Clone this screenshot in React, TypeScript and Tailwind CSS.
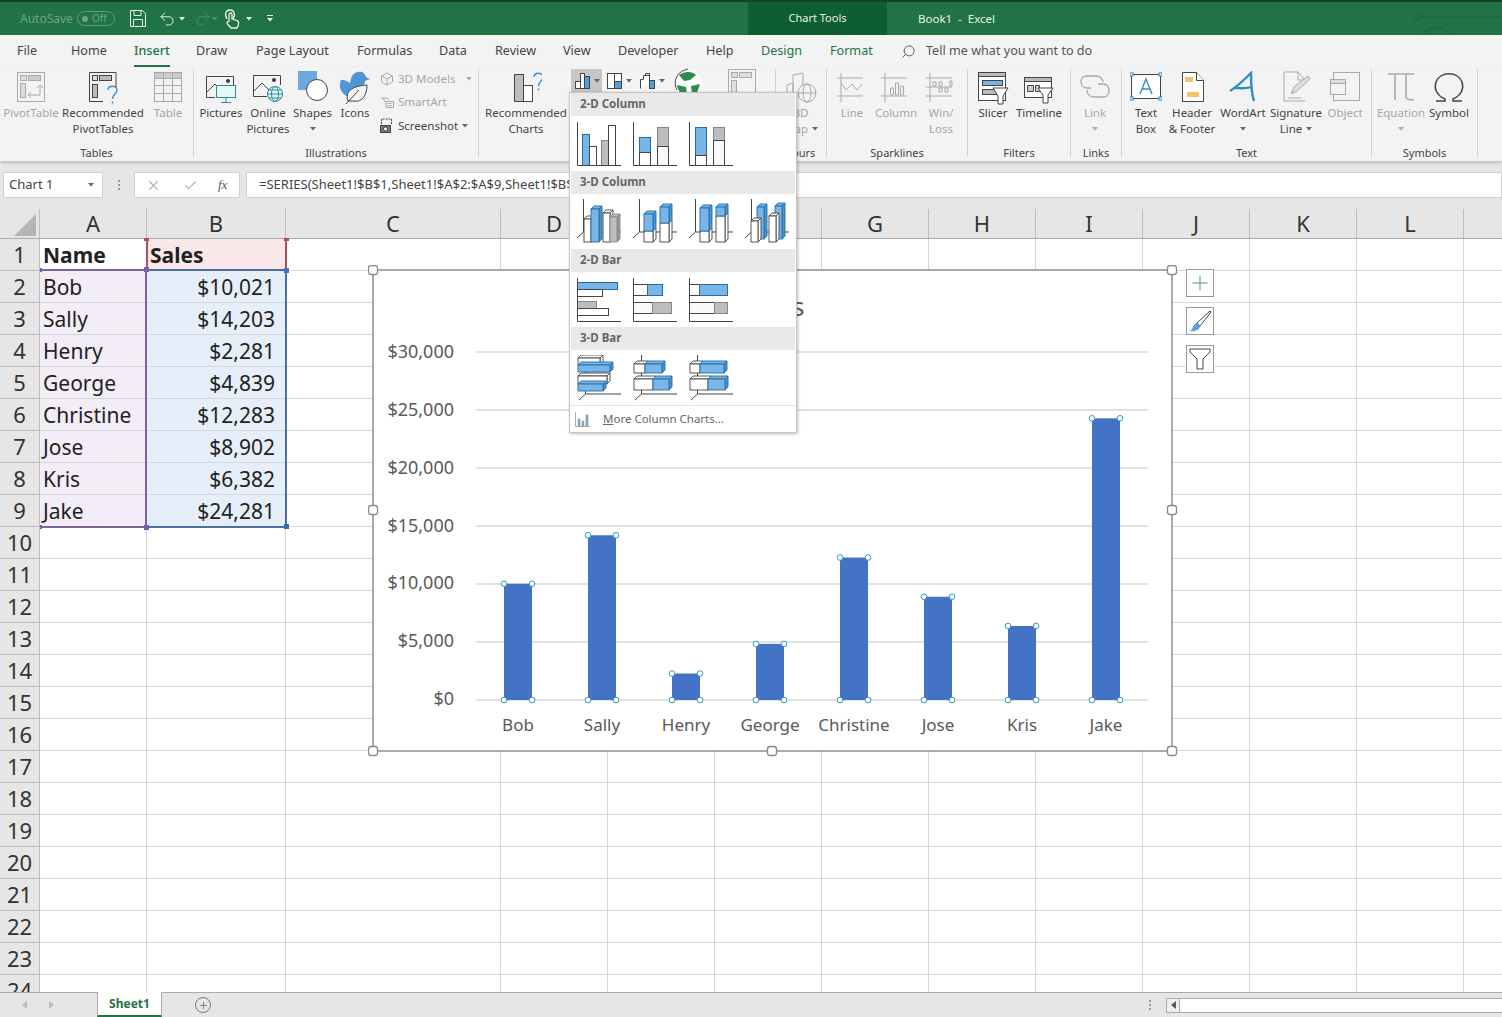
import React from "react";
import { Undo2, Redo2, Search, X, Check, Plus } from "lucide-react";

const D = "#444444";
const G = "#a9a9a9";
const B = "#7ab5e8";
const BD = "#1f6ea8";
const GR = "#bdbdbd";

function Q({ x, y, s = 1 }: { x: number; y: number; s?: number }) {
  return <path transform={`translate(${x} ${y}) scale(${s})`} d="M0 4 C0 -1 9 -1 9 4 C9 8 4.5 8 4.5 13 M4.5 15.5 V17.5" fill="none" stroke="#3b8ec9" strokeWidth="1.4" />;
}

const Icons: Record<string, React.ReactNode> = {
  pivot: (
    <g fill="none" stroke={G}>
      <rect x="2.5" y="1.5" width="27" height="29" />
      <rect x="5.5" y="4.5" width="6" height="5" fill="#ddd" />
      <rect x="13.5" y="4.5" width="12" height="5" fill="#ccc" />
      <rect x="5.5" y="12.5" width="5" height="14" fill="#ddd" />
      <path d="M13 24h12V14M22 17l3-3 3 3M16 21l-3 3 3 3" />
    </g>
  ),
  recPivot: (
    <g fill="none" stroke={D}>
      <path d="M16 30.5H2.5V1.5H29V17" />
      <rect x="5.5" y="4.5" width="5" height="5" fill="#ddd" />
      <rect x="12.5" y="4.5" width="12" height="5" fill="#bbb" />
      <rect x="5.5" y="13.5" width="5" height="13" fill="#bbb" />
      <Q x={21} y={15} s={1} />
    </g>
  ),
  table: (
    <g fill="none" stroke={G}>
      <rect x="2.5" y="1.5" width="27" height="29" />
      <rect x="2.5" y="1.5" width="27" height="6" fill="#ccc" />
      <path d="M11.5 1.5v29M20.5 1.5v29M2.5 14.5h27M2.5 22.5h27" />
    </g>
  ),
  pictures: (
    <g fill="none" stroke={D}>
      <path d="M10 26.5H1.5V5.5h27V14" />
      <path d="M2 21l8-8 6 6" />
      <circle cx="23" cy="10" r="1.6" fill={D} />
      <rect x="11.5" y="14.500" width="19" height="12" fill="#e4f6f6" stroke="#2b8aa0" />
      <path d="M21 27v4M16 31.500h10" stroke="#2b8aa0" />
    </g>
  ),
  online: (
    <g fill="none" stroke={D}>
      <path d="M28.500 14V4.500h-27v21H15" />
      <path d="M2 20l8-8 8 8" />
      <circle cx="22" cy="9" r="1.6" fill={D} />
      <g stroke="#2b8aa0">
        <circle cx="23" cy="23" r="7.500" fill="#e4f6f6" />
        <ellipse cx="23" cy="23" rx="3.500" ry="7.500" />
        <path d="M15.500 23h15M17 19h12M17 27h12" />
      </g>
    </g>
  ),
  shapes: (
    <g>
      <rect x="1" y="0" width="19" height="19" fill="#6ea8e0" />
      <circle cx="20" cy="19" r="10.500" fill="#fff" stroke={D} />
    </g>
  ),
  icons: (
    <g>
      <path d="M2 9c3-1 7 2 9 3 1-5 2-10 8-11 5-1 7 2 8 5l4 2-5 2c0 4-3 5-5 8l-7 9C5 26-2 18 2 9z" fill="#4f96d4" />
      <path d="M9 30c-3-9 3-15 19-16 0 9-4 18-14 16z" fill="#f3f3f3" stroke={D} />
      <path d="M7 33l13-14" stroke={D} fill="none" />
    </g>
  ),
  recChart: (
    <g stroke={D} fill="none">
      <rect x="4.5" y="3.5" width="9" height="27" fill="#bdbdbd" />
      <rect x="13.5" y="14.5" width="9" height="16" fill="#fff" />
      <Q x={24} y={2} s={1} />
    </g>
  ),
  globe: (
    <g>
      <circle cx="16" cy="16" r="13" fill="#fff" />
      <path d="M6 7c6-4 13-4 17 0l-6 5-6 1zM18 18l9-2-3 9-5 1zM4 17l9 2 1 9c-6-1-9-5-10-11z" fill="#2e8b4f" />
      <path d="M4 22C-1 12 5 3 15 1" fill="none" stroke={D} />
    </g>
  ),
  pivotChart: (
    <g fill="none" stroke={G}>
      <rect x="2.5" y="1.5" width="27" height="29" />
      <rect x="5.5" y="4.5" width="6" height="5" fill="#ddd" />
      <rect x="13.5" y="4.5" width="12" height="5" fill="#ddd" />
      <rect x="5.5" y="12.5" width="5" height="14" fill="#ddd" />
    </g>
  ),
  map3d: (
    <g fill="none" stroke={G}>
      <path d="M2 30V14l6-2v18M8 30V4l10-2v28" />
      <circle cx="22" cy="22" r="9" fill="#f3f3f3" />
      <ellipse cx="22" cy="22" rx="4" ry="9" />
      <path d="M13 22h18" />
    </g>
  ),
  spLine: (
    <g fill="none" stroke={G}>
      <path d="M1 7h26M1 25h26M5 2v29" />
      <path d="M5 12l5 7 6-6 5 6 5-6" />
    </g>
  ),
  spCol: (
    <g fill="none" stroke={G}>
      <path d="M1 7h26M1 25h26M5 2v29" />
      <path d="M10.5 24v-7h3v7zM15.5 24V12h3v12zM20.5 24v-9h3v9z" />
    </g>
  ),
  spWin: (
    <g fill="none" stroke={G}>
      <path d="M1 7h26M1 25h26M5 2v29M1 16h26" />
      <path d="M8 15v-4h3v4zM14 15v-4h3v4zM14 21v-4h3v4zM20 21v-4h3v4zM25 15v-5h2v5z" />
    </g>
  ),
  slicer: (
    <g stroke={D} fill="none">
      <rect x="1.5" y="1.5" width="27" height="28" fill="#fff" />
      <rect x="1.5" y="1.5" width="27" height="4" fill="#bbb" />
      <rect x="5.5" y="9.5" width="20" height="5" fill={B} />
      <rect x="5.5" y="18.5" width="14" height="5" fill="#bbb" />
      <path d="M16 17h15l-5 8v8h-5v-8z" fill="#fff" />
    </g>
  ),
  timeline: (
    <g stroke={D} fill="none">
      <rect x="1.5" y="6.5" width="27" height="20" fill="#fff" />
      <rect x="1.5" y="6.5" width="27" height="4" fill="#bbb" />
      <path d="M4.5 14.5h6v6h-6zM12.5 14.5h4v6h-4z" fill="#ccc" />
      <path d="M15 17h15l-5 7v8h-5v-8z" fill="#fff" />
    </g>
  ),
  link: (
    <g fill="none" stroke={G} strokeWidth="1.3">
      <path d="M12 17H8c-8 0-8-12 0-12h9c5 0 7 4 7 6" />
      <path d="M19 13h5c8 0 8 13 0 13h-9c-6 0-7-5-7-7" />
    </g>
  ),
  textbox: (
    <g>
      <rect x="1.5" y="3.5" width="29" height="24" fill="#fff" stroke={D} />
      <g fill="#fff" stroke="#2e7fb5">
        <rect x="0" y="2" width="3" height="3" />
        <rect x="29" y="2" width="3" height="3" />
        <rect x="0" y="26" width="3" height="3" />
        <rect x="29" y="26" width="3" height="3" />
      </g>
      <path d="M10 23l6-15 6 15M12 18h8" fill="none" stroke="#3b8ec9" strokeWidth="1.4" />
    </g>
  ),
  header: (
    <g stroke={D}>
      <path d="M6.5 1.5h14l7 8v21h-21z" fill="#fff" />
      <path d="M20.5 1.5v8h7" fill="#fff" />
      <rect x="9" y="6" width="8" height="5" fill="#f3c36b" stroke="none" />
      <rect x="11" y="21" width="12" height="5" fill="#f3c36b" stroke="none" />
    </g>
  ),
  wordart: (
    <g fill="none" stroke="#2f8ec2" strokeWidth="2.4">
      <path d="M3 20c8-5 15-12 21-18 0 9 0 19 3 28" />
      <path d="M8 17c5 0 11 1 16-1" />
    </g>
  ),
  signature: (
    <g fill="none" stroke={G}>
      <path d="M25 30H4V1h14l8 9" />
      <path d="M18 1v8h6" />
      <path d="M11 23l3-7 14-11 2 3-13 12z" fill="#ddd" />
      <path d="M8 27h13" />
    </g>
  ),
  object: (
    <g fill="none" stroke={G}>
      <rect x="4.5" y="1.5" width="26" height="28" />
      <rect x="1.5" y="8.5" width="15" height="15" fill="#f3f3f3" />
      <rect x="1.5" y="8.5" width="15" height="4" fill="#ddd" />
    </g>
  ),
  equation: (
    <g fill="none" stroke={G} strokeWidth="1.6">
      <path d="M3 3h26M10 3v26M21 3v23c0 2 2 3 8 3" />
    </g>
  ),
  symbol: (
    <g fill="none" stroke={D} strokeWidth="1.5">
      <path d="M3 30h9v-2C3 24 1 17 3 11c4-11 22-11 26 0 2 6 0 13-9 17v2h9" />
    </g>
  ),
};

function RibbonIcon({ k }: { k: string }) {
  return (
    <svg width="32" height="34" viewBox="0 0 32 34" className="shrink-0">
      {Icons[k]}
    </svg>
  );
}

function Caret({ c = "#666" }: { c?: string }) {
  return (
    <svg width="6" height="4" viewBox="0 0 6 4" className="shrink-0">
      <path d="M0 0h6L3 3.5z" fill={c} />
    </svg>
  );
}

function Item({ w, k, lines, off, caret }: { w: string; k: string; lines: string[]; off?: boolean; caret?: "below" | "inline" }) {
  return (
    <div className={`${w} flex flex-col items-center shrink-0 pt-1 text-[11.5px] leading-4 ${off ? "text-[#a6a6a6]" : "text-[#444]"}`}>
      <RibbonIcon k={k} />
      <div className="whitespace-nowrap">{lines[0]}</div>
      {lines[1] && (
        <div className="whitespace-nowrap flex items-center gap-1">
          {lines[1]}
          {caret === "inline" && <Caret />}
        </div>
      )}
      {caret === "below" && (
        <div className="h-4 flex items-center">
          <Caret c={off ? "#aaa" : "#666"} />
        </div>
      )}
    </div>
  );
}

function Group({ w, label, children }: { w: string; label: string; children: React.ReactNode }) {
  return (
    <div className={`${w} shrink-0 h-full flex`}>
      <div className="flex-1 min-w-0 flex flex-col">
        <div className="flex-1 flex">{children}</div>
        <div className="h-4 text-center text-[11px] leading-4 text-[#444]">{label}</div>
      </div>
      <div className="w-px h-[88px] mt-[2px] bg-[#d2d2d2]" />
    </div>
  );
}

const tabs = [
  ["File", "w-[53px] pl-[17px]", ""],
  ["Home", "w-[63px] pl-[18px]", ""],
  ["Insert", "w-[62px] pl-[18px]", "active"],
  ["Draw", "w-[61px] pl-[18px]", ""],
  ["Page Layout", "w-[101px] pl-[17px]", ""],
  ["Formulas", "w-[82px] pl-[17px]", ""],
  ["Data", "w-[56px] pl-[17px]", ""],
  ["Review", "w-[70px] pl-[17px]", ""],
  ["View", "w-[55px] pl-[15px]", ""],
  ["Developer", "w-[88px] pl-[15px]", ""],
  ["Help", "w-[55px] pl-[15px]", ""],
  ["Design", "w-[69px] pl-[15px]", "green"],
  ["Format", "w-[71px] pl-[15px]", "green"],
];

function Toggle() {
  return (
    <div className="w-[38px] h-[15px] rounded-full border border-[#5f9c7c] flex items-center pl-[4px] gap-[4px] text-[10px] text-[#6ea388]">
      <span className="w-[6px] h-[6px] rounded-full bg-[#6ea388]" />
      Off
    </div>
  );
}

function TitleBar() {
  return (
    <div className="h-[35px] bg-[#217346] border-t-2 border-[#17402a] flex items-stretch text-xs shrink-0 relative">
      <div className="w-[748px] flex items-center pl-[20px]">
        <span className="text-[#6ea388] w-[57px]">AutoSave</span>
        <Toggle />
        <svg width="16" height="17" viewBox="0 0 16 17" className="ml-[15px]" fill="none" stroke="#e8f1ec">
          <path d="M.5.5h12l3 3v13H.5zM4 .5v5h7v-5M3.5 16.5v-7h9v7" />
        </svg>
        <Undo2 size={18} color="#e8f1ec" strokeWidth={1.3} className="ml-[12px]" />
        <span className="ml-[3px]"><Caret c="#e8f1ec" /></span>
        <Redo2 size={18} color="#4f9070" strokeWidth={1.3} className="ml-[9px]" />
        <span><Caret c="#4f9070" /></span>
        <svg width="17" height="20" viewBox="0 0 17 20" fill="none" stroke="#e8f1ec" strokeWidth="1.3" className="ml-[6px]">
          <path d="M3 10C0 5 2 1 6 1s6 4 3 9" />
          <path d="M5 13V5.500c0-2 3-2 3 0V10l5 1.500c2 1 2 2 1.500 4L13 19H7l-3.500-4c-1.500-2 1-3 1.500-2" />
        </svg>
        <span className="ml-[5px]"><Caret c="#e8f1ec" /></span>
        <div className="ml-[15px] flex flex-col gap-[2px] items-center">
          <span className="w-[6px] h-px bg-[#e8f1ec]" />
          <Caret c="#e8f1ec" />
        </div>
      </div>
      <div className="w-[139px] bg-[#0f5e33] flex items-center justify-center text-[11px] text-[#e8f1ec]">Chart Tools</div>
      <div className="pl-[31px] flex items-center text-[11.5px] text-[#e8f1ec]">Book1&nbsp;&nbsp;-&nbsp;&nbsp;Excel</div>
      <svg width="90" height="33" viewBox="0 0 90 33" fill="none" stroke="#1c6a3f" strokeWidth="1.5" className="absolute right-0 top-0">
        <circle cx="6" cy="15" r="3" />
        <path d="M9 15h81M12 33c3-10 22-10 26 0" />
      </svg>
    </div>
  );
}

function TabsRow() {
  return (
    <div className="h-[32px] bg-[#f3f3f3] flex items-stretch text-[12.6px] shrink-0">
      {tabs.map(([t, c, s]) => (
        <div key={t} className={`${c} shrink-0 flex items-center`}>
          <span className={`relative ${s === "green" ? "text-[#217346]" : s === "active" ? "text-[#217346] font-medium" : "text-[#444]"}`}>
            {t}
            {s === "active" && <span className="absolute left-0 right-0 -bottom-[7px] h-[2px] bg-[#217346]" />}
          </span>
        </div>
      ))}
      <div className="flex items-center pl-[15px] text-[#555]">
        <Search size={15} strokeWidth={1.3} className="-scale-x-100" color="#444" />
        <span className="ml-[10px]">Tell me what you want to do</span>
      </div>
    </div>
  );
}

function Mini({ children, off, h }: { children: React.ReactNode; off?: boolean; h: string }) {
  return <div className={`flex items-center ${h} gap-1 text-[11.5px] whitespace-nowrap ${off ? "text-[#a6a6a6]" : "text-[#444]"}`}>{children}</div>;
}

function ChartMini({ k, sel }: { k: number; sel?: boolean }) {
  return (
    <div className={`h-[23px] flex items-center justify-center gap-[2px] ${k === 0 ? "w-[31px]" : "w-[33px]"} ${sel ? "bg-[#c6c6c6]" : ""}`}>
      <svg width="18" height="18" viewBox="0 0 18 18" stroke={D} fill="none">
        {k === 0 && (
          <>
            <rect x="1.5" y="9.5" width="5" height="7" fill="#fff" />
            <rect x="6.5" y="1.5" width="4" height="15" fill="#fff" />
            <rect x="10.5" y="4.5" width="5" height="12" fill="#4f9fe0" />
          </>
        )}
        {k === 1 && (
          <>
            <rect x="1.5" y="1.5" width="14" height="15" fill="#fff" />
            <rect x="8.5" y="9.5" width="7" height="7" fill="#4f9fe0" />
            <path d="M8.5 1.5v8" />
          </>
        )}
        {k === 2 && (
          <>
            <path d="M1.5 16.5v-9h3v-4h6v9" fill="#fff" />
            <path d="M6.5 3.5v-2h4v8" />
            <rect x="10.5" y="8.5" width="5" height="8" fill="#4f9fe0" />
          </>
        )}
      </svg>
      <Caret />
    </div>
  );
}

function Ribbon() {
  return (
    <div className="h-[94px] bg-[#f3f3f3] flex shrink-0 shadow-[0_2px_3px_rgba(0,0,0,0.18)] relative">
      <Group w="w-[194px]" label="Tables">
        <Item w="w-[62px]" k="pivot" lines={["PivotTable"]} off />
        <Item w="w-[82px]" k="recPivot" lines={["Recommended", "PivotTables"]} />
        <Item w="w-[48px]" k="table" lines={["Table"]} off />
      </Group>
      <Group w="w-[285px]" label="Illustrations">
        <div className="w-[4px]" />
        <Item w="w-[46px]" k="pictures" lines={["Pictures"]} />
        <Item w="w-[48px]" k="online" lines={["Online", "Pictures"]} />
        <Item w="w-[41px]" k="shapes" lines={["Shapes"]} caret="below" />
        <Item w="w-[44px]" k="icons" lines={["Icons"]} />
        <div className="pl-[3px] flex flex-col">
          <Mini off h="h-[23px]">
            <svg width="14" height="14" viewBox="0 0 14 14" fill="none" stroke={G}>
              <path d="M7 1l5.5 3v6L7 13 1.5 10V4zM1.5 4L7 7l5.5-3M7 7v6" />
            </svg>
            3D Models
            <span className="ml-[7px]"><Caret c="#aaa" /></span>
          </Mini>
          <Mini off h="h-[23px]">
            <svg width="14" height="14" viewBox="0 0 14 14" fill="none" stroke={G}>
              <path d="M1 3h6l2 2M3 3l2 4M6 6.500h7.500v6H6zM7.500 8.500h4M7.500 10.500h4" />
            </svg>
            SmartArt
          </Mini>
          <Mini h="h-[25px]">
            <svg width="14" height="16" viewBox="0 0 14 16" fill="none" stroke={D}>
              <path d="M1.500 6V1h10v5" strokeDasharray="2 1" />
              <rect x=".5" y="7.500" width="10" height="7" fill="#777" />
              <circle cx="5.500" cy="11" r="2" fill="#fff" />
            </svg>
            Screenshot
            <Caret />
          </Mini>
        </div>
      </Group>
      <Group w="w-[297px]" label="">
        <div className="w-[2px]" />
        <Item w="w-[90px]" k="recChart" lines={["Recommended", "Charts"]} />
        <div className="flex items-start pt-[2px]">
          <ChartMini k={0} sel />
          <ChartMini k={1} />
          <ChartMini k={2} />
        </div>
        <div className="pl-[5px] pt-[1px]"><RibbonIcon k="globe" /></div>
        <div className="pl-[21px] pt-[1px]"><RibbonIcon k="pivotChart" /></div>
      </Group>
      <Group w="w-[51px]" label="Tours">
        <Item w="w-[50px]" k="map3d" lines={["3D", "Map"]} off caret="inline" />
      </Group>
      <Group w="w-[141px]" label="Sparklines">
        <Item w="w-[50px]" k="spLine" lines={["Line"]} off />
        <Item w="w-[38px]" k="spCol" lines={["Column"]} off />
        <Item w="w-[52px]" k="spWin" lines={["Win/", "Loss"]} off />
      </Group>
      <Group w="w-[103px]" label="Filters">
        <Item w="w-[50px]" k="slicer" lines={["Slicer"]} />
        <Item w="w-[42px]" k="timeline" lines={["Timeline"]} />
      </Group>
      <Group w="w-[51px]" label="Links">
        <Item w="w-[48px]" k="link" lines={["Link"]} off caret="below" />
      </Group>
      <Group w="w-[250px]" label="Text">
        <Item w="w-[48px]" k="textbox" lines={["Text", "Box"]} />
        <Item w="w-[44px]" k="header" lines={["Header", "& Footer"]} />
        <Item w="w-[58px]" k="wordart" lines={["WordArt"]} caret="below" />
        <Item w="w-[48px]" k="signature" lines={["Signature", "Line"]} caret="inline" />
        <Item w="w-[50px]" k="object" lines={["Object"]} off />
      </Group>
      <Group w="w-[106px]" label="Symbols">
        <Item w="w-[58px]" k="equation" lines={["Equation"]} off caret="below" />
        <Item w="w-[38px]" k="symbol" lines={["Symbol"]} />
      </Group>
    </div>
  );
}

function FormulaBar() {
  return (
    <div className="h-[48px] bg-[#e6e6e6] flex items-start pt-[11px] shrink-0 pl-[3px] pb-[11px]">
      <div className="w-[100px] h-[26px] bg-white border border-[#d0d0d0] flex items-center pl-[5px] pr-[8px] justify-between text-[13px] text-[#444]">
        Chart 1
        <Caret />
      </div>
      <div className="w-[31px] h-[26px] flex flex-col items-center justify-center gap-[2px]">
        <span className="w-[2px] h-[2px] bg-[#999]" />
        <span className="w-[2px] h-[2px] bg-[#999]" />
        <span className="w-[2px] h-[2px] bg-[#999]" />
      </div>
      <div className="w-[106px] h-[26px] bg-white border border-[#d0d0d0] flex items-center pl-[11px]">
        <X size={15} color="#b5b5b5" />
        <Check size={15} color="#b5b5b5" className="ml-[22px]" />
        <span className="ml-[20px] text-[13px] italic text-[#555] font-['Liberation_Serif',serif]">fx</span>
      </div>
      <div className="ml-[6px] flex-1 h-[26px] bg-white border border-[#d0d0d0] flex items-center pl-[12px] text-[13px] text-[#444] whitespace-nowrap overflow-hidden">
        =SERIES(Sheet1!$B$1,Sheet1!$A$2:$A$9,Sheet1!$B$2:$B$9,1)
      </div>
    </div>
  );
}

const colWidths = ["w-[107px]", "w-[139px]", "w-[215px]", "w-[107px]", "w-[107px]", "w-[107px]", "w-[107px]", "w-[107px]", "w-[107px]", "w-[107px]", "w-[107px]", "w-[107px]", "w-[39px]"];
const colNames = ["A", "B", "C", "D", "E", "F", "G", "H", "I", "J", "K", "L", ""];
const data: [string, string][] = [
  ["Name", "Sales"],
  ["Bob", "$10,021"],
  ["Sally", "$14,203"],
  ["Henry", "$2,281"],
  ["George", "$4,839"],
  ["Christine", "$12,283"],
  ["Jose", "$8,902"],
  ["Kris", "$6,382"],
  ["Jake", "$24,281"],
];

function Sheet() {
  const rows = Array.from({ length: 24 }, (_, i) => i);
  return (
    <div className="flex-1 min-h-0 overflow-hidden bg-white">
      <div className="flex h-[30px] bg-[#e6e6e6] border-b border-[#ababab]">
        <div className="w-[40px] shrink-0 border-r border-[#bdbdbd] relative">
          <svg width="24" height="24" viewBox="0 0 24 24" className="absolute right-[2px] bottom-[1px]">
            <path d="M23 1v22H1z" fill="#b4b4b4" />
          </svg>
        </div>
        {colWidths.map((w, i) => (
          <div key={i} className={`${w} shrink-0 border-r border-[#bdbdbd] flex items-center justify-center text-[22px] text-[#333]`}>
            {colNames[i]}
          </div>
        ))}
      </div>
      {rows.map((r) => (
        <div key={r} className="flex h-[32px]">
          <div className="w-[40px] shrink-0 bg-[#e6e6e6] border-r border-b border-[#bdbdbd] flex items-center justify-center text-[22px] text-[#333]">{r + 1}</div>
          {colWidths.map((w, c) => {
            const d = data[r];
            const tint = d ? (c === 0 && r > 0 ? "bg-[#f3edf8]" : c === 1 && r > 0 ? "bg-[#e6eff9]" : c === 1 ? "bg-[#fae8e8]" : "") : "";
            return (
              <div key={c} className={`${w} ${tint} shrink-0 border-r border-b border-[#d6d6d6] flex items-center pt-[2px] text-[21px] text-[#222] whitespace-nowrap ${c === 1 && r > 0 ? "justify-end pr-[10px]" : "pl-[3px]"} ${r === 0 ? "font-bold" : ""}`}>
                {d && c < 2 ? d[c] : ""}
              </div>
            );
          })}
        </div>
      ))}
    </div>
  );
}

function StatusBar() {
  return (
    <div className="h-[25px] bg-[#e6e6e6] border-t border-[#ababab] flex items-stretch shrink-0 relative">
      <div className="w-[97px] flex items-center pl-[22px] gap-[22px]">
        <svg width="5" height="8" viewBox="0 0 5 8"><path d="M5 0v8L0 4z" fill="#bbb" /></svg>
        <svg width="5" height="8" viewBox="0 0 5 8"><path d="M0 0v8l5-4z" fill="#bbb" /></svg>
      </div>
      <div className="w-[65px] bg-white border-x border-[#ababab] border-b-2 border-b-[#217346] -mt-px flex items-center justify-center text-xs font-bold text-[#217346]">Sheet1</div>
      <div className="ml-[33px] flex items-center">
        <div className="w-[16px] h-[16px] rounded-full border border-[#777] flex items-center justify-center">
          <Plus size={11} color="#666" strokeWidth={1.6} />
        </div>
      </div>
      <div className="flex-1 flex items-center justify-end">
        <div className="flex flex-col gap-[2px] mr-[15px]">
          <span className="w-[2px] h-[2px] bg-[#999]" />
          <span className="w-[2px] h-[2px] bg-[#999]" />
          <span className="w-[2px] h-[2px] bg-[#999]" />
        </div>
        <div className="w-[14px] h-[15px] border border-[#ababab] bg-[#eee] flex items-center justify-center">
          <svg width="5" height="8" viewBox="0 0 5 8"><path d="M5 0v8L0 4z" fill="#555" /></svg>
        </div>
        <div className="w-[322px] h-[15px] bg-white border-y border-[#ababab]" />
      </div>
    </div>
  );
}

const bars: [string, number][] = [
  ["Bob", 10021],
  ["Sally", 14203],
  ["Henry", 2281],
  ["George", 4839],
  ["Christine", 12283],
  ["Jose", 8902],
  ["Kris", 6382],
  ["Jake", 24281],
];
const ticks = ["$0", "$5,000", "$10,000", "$15,000", "$20,000", "$25,000", "$30,000"];

function ChartOverlay() {
  const handles = [
    [373, 270], [772, 270], [1172, 270],
    [373, 510], [1172, 510],
    [373, 751], [772, 751], [1172, 751],
  ];
  return (
    <svg width="810" height="492" viewBox="368 265 810 492" className="absolute left-[368px] top-[265px]" fontFamily="'Noto Sans', sans-serif">
      <rect x="373" y="270" width="799" height="481" fill="#fff" stroke="#8f8f8f" strokeWidth="1.5" />
      <text x="773" y="316" textAnchor="middle" fontSize="26" fill="#595959">Sales</text>
      {ticks.map((t, i) => {
        const y = 700 - i * 58;
        return (
          <g key={t}>
            <line x1="476" x2="1148" y1={y} y2={y} stroke="#d9d9d9" strokeWidth="1.5" />
            <text x="454" y={705 - i * 57.83} textAnchor="end" fontSize="18" fill="#595959">{t}</text>
          </g>
        );
      })}
      {bars.map(([n, v], i) => {
        const cx = 518 + i * 84;
        const top = 700 - (v * 348) / 30000;
        return (
          <g key={n}>
            <rect x={cx - 14} y={top} width="28" height={700 - top} fill="#4472c4" />
            {[[cx - 14, top], [cx + 14, top], [cx - 14, 700], [cx + 14, 700]].map(([x, y], j) => (
              <circle key={j} cx={x} cy={y} r="2.800" fill="#fff" stroke="#2f9ac6" />
            ))}
            <text x={cx} y="730.500" textAnchor="middle" fontSize="17" fill="#595959">{n}</text>
          </g>
        );
      })}
      {handles.map(([x, y], i) => (
        <rect key={i} x={x - 4.500} y={y - 4.500} width="9" height="9" rx="2.500" fill="#fff" stroke="#8a8a8a" strokeWidth="1.300" />
      ))}
    </svg>
  );
}

function SideBtn({ children, top }: { children: React.ReactNode; top: string }) {
  return <div className={`absolute left-[1186px] ${top} w-[28px] h-[28px] bg-white border border-[#9a9a9a] flex items-center justify-center`}>{children}</div>;
}

function Col2D({ segs }: { segs: number[][] }) {
  const colors = ["#fff", B, GR, "#f8f8f8"];
  return (
    <svg width="45" height="45" viewBox="0 0 45 45" className="shrink-0">
      {segs.map(([x, y, w, h, c], i) => (
        <rect key={i} x={x + 0.5} y={y + 0.5} width={w} height={h} fill={colors[c]} stroke={c === 1 ? BD : c === 2 ? "#888" : D} />
      ))}
      <path d="M.5 0v43.500H44" fill="none" stroke={D} />
    </svg>
  );
}

function Bar3(x: number, y: number, w: number, h: number, c: number, key: string) {
  const col = c === 1 ? B : c === 2 ? GR : "#fff";
  const side = c === 1 ? "#4f93cf" : c === 2 ? "#999" : "#fff";
  const st = c === 1 ? BD : c === 2 ? "#888" : D;
  return (
    <g key={key} stroke={st} strokeWidth=".9">
      <path d={`M${x} ${y}l3 -3h${w}l-3 3z`} fill={col} />
      <path d={`M${x + w} ${y}l3 -3v${h}l-3 3z`} fill={side} />
      <rect x={x} y={y} width={w} height={h} fill={col} />
    </g>
  );
}

function Col3D({ bars3 }: { bars3: number[][] }) {
  return (
    <svg width="46" height="46" viewBox="0 0 46 46" className="shrink-0">
      <path d="M6.500 0v33L0 39M6.500 33H44" fill="none" stroke={D} />
      {bars3.map(([x, y, w, h, c], i) => Bar3(x, y, w, h, c, String(i)))}
    </svg>
  );
}

function Bar3D({ segs, axisY = 39 }: { segs: number[][]; axisY?: number }) {
  return (
    <svg width="46" height="46" viewBox="0 0 46 46" className="shrink-0">
      <path d={`M8.500 0V${axisY}L2 45M8.500 ${axisY}H44`} fill="none" stroke={D} />
      {segs.map(([x, y, w, h, c], i) => Bar3(x, y, w, h, c, String(i)))}
    </svg>
  );
}

function MenuHead({ children }: { children: React.ReactNode }) {
  return <div className="h-[23px] mx-px bg-[#e9e9e9] flex items-center pl-[9px] pb-[2px] text-[11.5px] font-bold text-[#666]">{children}</div>;
}

function ChartMenu() {
  return (
    <div className="absolute left-[569px] top-[92px] w-[228px] bg-white border border-[#c6c6c6] shadow-[1px_1px_3px_rgba(0,0,0,0.25)]">
      <MenuHead>2-D Column</MenuHead>
      <div className="h-[55px] flex gap-[11px] pl-[7px] pt-[6px]">
        <Col2D segs={[[5, 12, 7, 31, 1], [12, 24, 7, 19, 0], [24, 18, 7, 25, 2], [31, 3, 7, 40, 0]]} />
        <Col2D segs={[[6, 15, 11, 15, 1], [6, 30, 11, 13, 0], [24, 5, 11, 19, 2], [24, 24, 11, 19, 3]]} />
        <Col2D segs={[[6, 5, 11, 28, 1], [6, 33, 11, 10, 0], [24, 5, 11, 13, 2], [24, 18, 11, 25, 3]]} />
      </div>
      <MenuHead>3-D Column</MenuHead>
      <div className="h-[55px] flex gap-[10px] pl-[7px] pt-[5px]">
        <Col3D bars3={[[7, 20, 7, 23, 0], [14, 10, 8, 33, 1], [26, 14, 7, 29, 0], [33, 18, 7, 25, 2]]} />
        <Col3D bars3={[[11, 32, 9, 11, 0], [11, 15, 9, 17, 1], [27, 24, 9, 19, 0], [27, 8, 9, 16, 1]]} />
        <Col3D bars3={[[11, 32, 9, 11, 0], [11, 9, 9, 23, 1], [27, 17, 9, 26, 0], [27, 8, 9, 9, 1]]} />
        <Col3D bars3={[[12, 8, 7, 32, 1], [30, 7, 7, 33, 1], [6, 22, 7, 21, 0], [24, 17, 7, 26, 0]]} />
      </div>
      <MenuHead>2-D Bar</MenuHead>
      <div className="h-[55px] flex gap-[11px] pl-[7px] pt-[6px]">
        <Col2D segs={[[0, 4, 40, 7, 1], [0, 11, 25, 7, 0], [0, 23, 19, 7, 2], [0, 30, 31, 7, 0]]} />
        <Col2D segs={[[0, 6, 14, 11, 0], [14, 6, 15, 11, 1], [0, 24, 19, 11, 3], [19, 24, 19, 11, 2]]} />
        <Col2D segs={[[0, 6, 10, 11, 0], [10, 6, 28, 11, 1], [0, 24, 25, 11, 3], [25, 24, 13, 11, 2]]} />
      </div>
      <MenuHead>3-D Bar</MenuHead>
      <div className="h-[55px] flex gap-[10px] pl-[7px] pt-[5px]">
        <Bar3D segs={[[1, 3, 22, 7, 0], [1, 10, 32, 7, 1], [1, 21, 29, 8, 0], [1, 29, 25, 7, 1]]} />
        <Bar3D segs={[[1, 9, 11, 9, 0], [12, 9, 17, 9, 1], [1, 24, 19, 11, 0], [20, 24, 16, 11, 1]]} />
        <Bar3D segs={[[1, 9, 10, 9, 0], [11, 9, 24, 9, 1], [1, 24, 18, 11, 0], [19, 24, 17, 11, 1]]} />
      </div>
      <div className="border-t border-[#e2e2e2] h-[27px] flex items-center pl-[5px] text-[11.5px] text-[#666]">
        <svg width="15" height="15" viewBox="0 0 15 15" fill="none">
          <path d="M.5 0v14.500H15" stroke="#aaa" />
          <path d="M3 14V7h2v7zM7 14V9h2v5zM11 14V3h2v11z" fill="#7fa9c9" stroke="#8a9aa6" strokeWidth=".6" />
        </svg>
        <span className="ml-[13px]"><span className="underline">M</span>ore Column Charts...</span>
      </div>
    </div>
  );
}

export default function App() {
  return (
    <div className="relative w-[1502px] h-[1017px] overflow-hidden flex flex-col bg-white font-['Noto_Sans',sans-serif]">
      <TitleBar />
      <TabsRow />
      <Ribbon />
      <FormulaBar />
      <Sheet />
      <StatusBar />

      {/* range selection outlines */}
      <div className="absolute left-[146px] top-[239px] w-[141px] h-[31px] border-x-2 border-[#a3535b]" />
      <div className="absolute left-[40px] top-[269px] w-[107px] h-[259px] border-y-2 border-r-2 border-[#8064a2]" />
      <div className="absolute left-[147px] top-[269px] w-[140px] h-[259px] border-y-2 border-r-2 border-[#4a6fa5]" />
      <div className="absolute left-[144px] top-[238px] w-[5px] h-[3px] bg-[#a3535b]" />
      <div className="absolute left-[284px] top-[238px] w-[5px] h-[3px] bg-[#a3535b]" />
      <div className="absolute left-[144px] top-[267px] w-[5px] h-[5px] bg-[#7b5ea7]" />
      <div className="absolute left-[284px] top-[268px] w-[5px] h-[5px] bg-[#4472c4]" />
      <div className="absolute left-[144px] top-[525px] w-[5px] h-[5px] bg-[#7b5ea7]" />
      <div className="absolute left-[284px] top-[524px] w-[5px] h-[5px] bg-[#2f6fb5]" />
      <div className="absolute left-[40px] top-[268px] w-[2px] h-[4px] bg-[#7b5ea7]" />
      <div className="absolute left-[40px] top-[525px] w-[2px] h-[4px] bg-[#7b5ea7]" />

      <ChartOverlay />
      <SideBtn top="top-[269px]"><Plus size={24} color="#3a9a6a" strokeWidth={1} /></SideBtn>
      <SideBtn top="top-[307px]">
        <svg width="24" height="24" viewBox="0 0 24 24">
          <path d="M9 14L22 2l1 1-11 14z" fill="#fff" stroke="#444" />
          <path d="M1 22c4 0 3-5 7-8 2 0 4 2 4 4-1 3-6 5-11 4z" fill="#5c9fe0" />
        </svg>
      </SideBtn>
      <SideBtn top="top-[345px]">
        <svg width="24" height="24" viewBox="0 0 24 24" fill="#fff" stroke="#444">
          <path d="M2 2h20v3l-7 7v10H9V12L2 5z" />
        </svg>
      </SideBtn>

      <ChartMenu />
    </div>
  );
}
